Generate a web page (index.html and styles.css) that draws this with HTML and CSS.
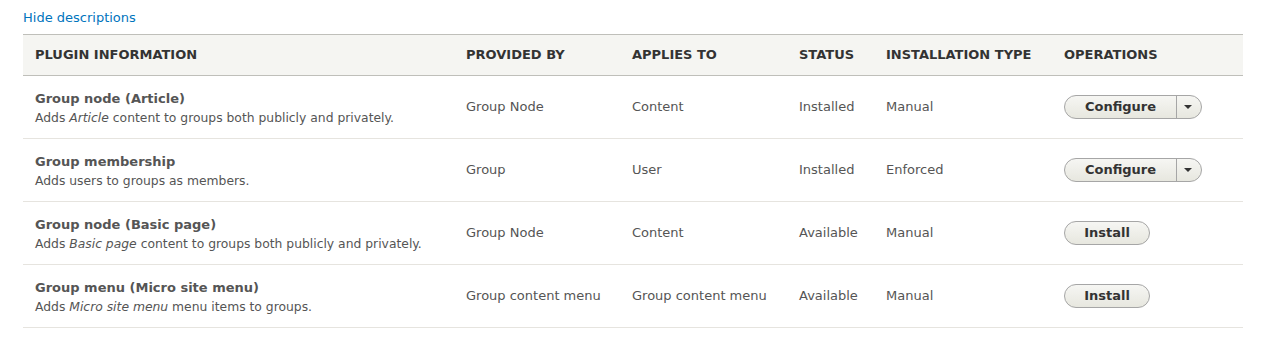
FILE: index.html
```html
<!DOCTYPE html>
<html>
<head>
<meta charset="utf-8">
<link rel="stylesheet" href="styles.css">
</head>
<body>
<div class="page">
  <div class="toggle-row"><a href="#" class="toggle-link">Hide descriptions</a></div>
  <table class="plugins">
    <colgroup>
      <col class="c1"><col class="c2"><col class="c3"><col class="c4"><col class="c5"><col class="c6">
    </colgroup>
    <thead>
      <tr>
        <th>Plugin information</th>
        <th>Provided by</th>
        <th>Applies to</th>
        <th>Status</th>
        <th>Installation type</th>
        <th>Operations</th>
      </tr>
    </thead>
    <tbody>
      <tr>
        <td><div class="title">Group node (Article)</div><div class="desc">Adds <em>Article</em> content to groups both publicly and privately.</div></td>
        <td>Group Node</td>
        <td>Content</td>
        <td>Installed</td>
        <td>Manual</td>
        <td><div class="dropbutton"><span class="db-main">Configure</span><span class="db-toggle"><span class="arrow"></span></span></div></td>
      </tr>
      <tr>
        <td><div class="title">Group membership</div><div class="desc">Adds users to groups as members.</div></td>
        <td>Group</td>
        <td>User</td>
        <td>Installed</td>
        <td>Enforced</td>
        <td><div class="dropbutton"><span class="db-main">Configure</span><span class="db-toggle"><span class="arrow"></span></span></div></td>
      </tr>
      <tr>
        <td><div class="title">Group node (Basic page)</div><div class="desc">Adds <em>Basic page</em> content to groups both publicly and privately.</div></td>
        <td>Group Node</td>
        <td>Content</td>
        <td>Available</td>
        <td>Manual</td>
        <td><span class="button">Install</span></td>
      </tr>
      <tr>
        <td><div class="title">Group menu (Micro site menu)</div><div class="desc">Adds <em>Micro site menu</em> menu items to groups.</div></td>
        <td>Group content menu</td>
        <td>Group content menu</td>
        <td>Available</td>
        <td>Manual</td>
        <td><span class="button">Install</span></td>
      </tr>
    </tbody>
  </table>
</div>
</body>
</html>
```
FILE: styles.css
```css
html, body {
  margin: 0;
  padding: 0;
  background: #fff;
}
body {
  font-family: "DejaVu Sans", Verdana, sans-serif;
  font-size: 13px;
  color: #555;
}
.page {
  padding: 8px 19px 0 23px;
}
.toggle-row {
  line-height: 20px;
  margin-bottom: 6px;
}
.toggle-link {
  color: #0074bd;
  text-decoration: none;
}
.plugins {
  width: 100%;
  border-collapse: collapse;
  table-layout: fixed;
}
.c1 { width: 431px; }
.c2 { width: 166px; }
.c3 { width: 167px; }
.c4 { width: 87px; }
.c5 { width: 178px; }
.c6 { width: auto; }
.plugins thead tr {
  border-top: 1px solid #bfbfba;
  border-bottom: 1px solid #bfbfba;
}
.plugins th {
  background: #f5f5f2;
  color: #333;
  font-weight: bold;
  text-transform: uppercase;
  text-align: left;
  padding: 10px 12px;
  height: 20px;
  line-height: 20px;
}
.plugins tbody tr {
  border-bottom: 1px solid #e6e4df;
}
.plugins td {
  padding: 10px 12px;
  height: 42px;
  line-height: 20px;
  vertical-align: middle;
}
.title {
  font-weight: bold;
  line-height: 20px;
  margin-top: 3px;
}
.desc {
  font-size: 12.35px;
  line-height: 19px;
}
.dropbutton {
  display: inline-flex;
  height: 22px;
  border: 1px solid #a6a6a6;
  border-radius: 20px;
  background: linear-gradient(to bottom, #f6f6f3, #e7e7df);
  color: #333;
  font-weight: bold;
  vertical-align: middle;
  margin-top: -1px;
}
.db-main {
  width: 111px;
  text-align: center;
  line-height: 22px;
  border-right: 1px solid #a6a6a6;
}
.db-toggle {
  width: 24px;
  display: flex;
  align-items: center;
  justify-content: center;
}
.arrow {
  width: 0;
  height: 0;
  border-left: 4px solid transparent;
  border-right: 4px solid transparent;
  border-top: 4px solid #333;
  margin-right: 3px;
  margin-top: 1px;
}
.button {
  display: inline-block;
  width: 84px;
  height: 22px;
  line-height: 22px;
  text-align: center;
  border: 1px solid #a6a6a6;
  border-radius: 20px;
  background: linear-gradient(to bottom, #f6f6f3, #e7e7df);
  color: #333;
  font-weight: bold;
  vertical-align: middle;
  margin-top: -1px;
}
```
